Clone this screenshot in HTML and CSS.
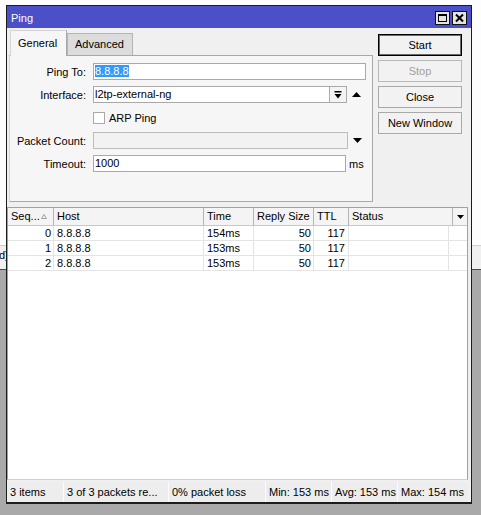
FILE: index.html
```html
<!DOCTYPE html>
<html>
<head>
<meta charset="utf-8">
<title>Ping</title>
<link rel="stylesheet" href="styles.css">
</head>
<body>
<div class="desk">
  <div class="desk-top"></div>
  <div class="desk-strip"><span class="peek">d)</span></div>
  <div class="desk-bottom"></div>
</div>

<div class="window">
  <div class="titlebar">
    <span class="title">Ping</span>
    <div class="tbtns">
      <span class="tbtn"><svg width="13" height="12" viewBox="0 0 13 12"><rect x="2.5" y="2.5" width="8" height="7" fill="none" stroke="#000" stroke-width="1"/><rect x="2" y="2" width="9" height="2" fill="#000"/></svg></span>
      <span class="tbtn"><svg width="13" height="12" viewBox="0 0 13 12"><path d="M3 2.5 L10 9.5 M10 2.5 L3 9.5" stroke="#000" stroke-width="2"/></svg></span>
    </div>
  </div>

  <div class="wbody">
    <div class="top">
      <div class="tabs">
        <div class="tabstrip">
          <div class="tab active">General</div>
          <div class="tab">Advanced</div>
        </div>
        <div class="panel">
          <div class="row">
            <span class="lbl">Ping To:</span>
            <div class="field">
              <div class="input"><span class="sel">8.8.8.8</span></div>
            </div>
          </div>
          <div class="row">
            <span class="lbl">Interface:</span>
            <div class="field">
              <div class="input">l2tp-external-ng</div>
              <div class="ddbtn"><svg width="8" height="8" viewBox="0 0 8 8"><rect x="0.5" y="0" width="7" height="1.5" fill="#000"/><polygon points="0.5,3 7.5,3 4,7.5" fill="#000"/></svg></div>
              <div class="arrow"><svg width="9" height="5" viewBox="0 0 9 5"><polygon points="0,5 9,5 4.5,0" fill="#000"/></svg></div>
            </div>
          </div>
          <div class="row">
            <span class="lbl"></span>
            <div class="field check">
              <span class="cb"></span>
              <span class="cblabel">ARP Ping</span>
            </div>
          </div>
          <div class="row">
            <span class="lbl">Packet Count:</span>
            <div class="field">
              <div class="input dis"></div>
              <div class="arrow"><svg width="9" height="5" viewBox="0 0 9 5"><polygon points="0,0 9,0 4.5,5" fill="#000"/></svg></div>
            </div>
          </div>
          <div class="row">
            <span class="lbl">Timeout:</span>
            <div class="field">
              <div class="input">1000</div>
              <div class="unit">ms</div>
            </div>
          </div>
        </div>
      </div>
      <div class="buttons">
        <div class="btn default">Start</div>
        <div class="btn disabled">Stop</div>
        <div class="btn">Close</div>
        <div class="btn">New Window</div>
      </div>
    </div>

    <div class="table">
      <div class="thead">
        <div class="th c-seq"><span>Seq...</span><svg class="sort" width="6" height="5" viewBox="0 0 6 5"><polygon points="0.5,4.5 5.5,4.5 3,0.5" fill="none" stroke="#a0a0a0" stroke-width="1"/></svg></div>
        <div class="th c-host">Host</div>
        <div class="th c-time">Time</div>
        <div class="th c-size">Reply Size</div>
        <div class="th c-ttl">TTL</div>
        <div class="th c-status">Status</div>
        <div class="th c-menu"><svg width="7" height="4" viewBox="0 0 7 4"><polygon points="0,0 7,0 3.5,4" fill="#000"/></svg></div>
      </div>
      <div class="tr">
        <div class="td c-seq num">0</div>
        <div class="td c-host">8.8.8.8</div>
        <div class="td c-time">154ms</div>
        <div class="td c-size num">50</div>
        <div class="td c-ttl num">117</div>
        <div class="td c-rstatus"></div>
        <div class="td c-rmenu"></div>
      </div>
      <div class="tr">
        <div class="td c-seq num">1</div>
        <div class="td c-host">8.8.8.8</div>
        <div class="td c-time">153ms</div>
        <div class="td c-size num">50</div>
        <div class="td c-ttl num">117</div>
        <div class="td c-rstatus"></div>
        <div class="td c-rmenu"></div>
      </div>
      <div class="tr">
        <div class="td c-seq num">2</div>
        <div class="td c-host">8.8.8.8</div>
        <div class="td c-time">153ms</div>
        <div class="td c-size num">50</div>
        <div class="td c-ttl num">117</div>
        <div class="td c-rstatus"></div>
        <div class="td c-rmenu"></div>
      </div>
    </div>

    <div class="status">
      <div class="sc s1">3 items</div>
      <div class="sc s2">3 of 3 packets re...</div>
      <div class="sc s3">0% packet loss</div>
      <div class="sc s4">Min: 153 ms</div>
      <div class="sc s5">Avg: 153 ms</div>
      <div class="sc s6">Max: 154 ms</div>
    </div>
  </div>
</div>
</body>
</html>
```
FILE: styles.css
```css
* { box-sizing: border-box; }
html, body { margin: 0; padding: 0; }
body {
  width: 481px;
  height: 515px;
  overflow: hidden;
  position: relative;
  font-family: "Liberation Sans", Arial, sans-serif;
  font-size: 11px;
  color: #000;
  background: #fff;
}

/* desktop behind the window */
.desk { display: flex; flex-direction: column; height: 515px; }
.desk-top { height: 245px; background: #fdfdfd; }
.desk-strip {
  height: 25px;
  background: #f0f0f0;
  border-top: 1px solid #cfcfcf;
  border-bottom: 1px solid #4a4a4a;
  padding-top: 3px;
  line-height: 13px;
}
.peek { display: block; color: #000; margin-left: -1px; }
.desk-bottom { flex: 1; background: #a9a9a9; }

/* window */
.window {
  position: absolute;
  left: 6px;
  top: 5px;
  width: 466px;
  height: 499px;
  border: 1px solid #1c1c1c;
  border-bottom-width: 2px;
  background: #f0f0f0;
  display: flex;
  flex-direction: column;
}
.titlebar {
  height: 22px;
  background: #4b50c8;
  display: flex;
  justify-content: space-between;
  padding: 0 4px 0 4px;
  flex: none;
}
.title {
  color: #fff;
  padding-top: 3px;
  line-height: 19px;
}
.tbtns { display: flex; gap: 2px; padding-top: 5px; }
.tbtn {
  width: 15px;
  height: 14px;
  border: 1px solid #111;
  background: #e4e4e4;
  display: flex;
  align-items: center;
  justify-content: center;
}
.tbtn svg { display: block; }

.wbody {
  flex: 1;
  display: flex;
  flex-direction: column;
  min-height: 0;
}
.top {
  height: 179px;
  display: flex;
  flex: none;
}
.tabs {
  margin-left: 2px;
  width: 364px;
  display: flex;
  flex-direction: column;
}
.tabstrip {
  margin-top: 2px;
  height: 25px;
  display: flex;
  align-items: flex-end;
  padding-left: 1px;
}
.tab {
  height: 22px;
  line-height: 21px;
  padding-left: 7px;
  width: 66px;
  background: #dcdcdc;
  border: 1px solid #b4b4b4;
  border-bottom: none;
}
.tab.active {
  position: relative;
  z-index: 1;
  width: 57px;
  height: 26px;
  margin-bottom: -1px;
  line-height: 25px;
  padding-left: 7px;
  background: #f6f6f6;
  border: 1px solid #d4d4d4;
  border-right-color: #a9a9a9;
  border-bottom: none;
}
.panel {
  height: 147px;
  background: #f6f6f6;
  border: 1px solid #a8a8a8;
  border-left-color: #d4d4d4;
  padding-top: 7px;
}
.row {
  display: flex;
  align-items: center;
  height: 17px;
  margin-bottom: 6px;
}
.lbl {
  width: 76px;
  margin-right: 7px;
  text-align: right;
  white-space: nowrap;
}
.field {
  width: 273px;
  height: 17px;
  display: flex;
  align-items: center;
}
.input {
  flex: 1;
  height: 17px;
  background: #fff;
  border: 1px solid #a9a9a9;
  padding-left: 1px;
  line-height: 15px;
  white-space: nowrap;
  overflow: hidden;
}
.input.dis { background: #f2f2f2; border-color: #bcbcbc; }
.sel { background: #3399ff; color: #fff; }
.ddbtn {
  width: 17px;
  height: 17px;
  border: 1px solid #a9a9a9;
  border-left: none;
  background: #f4f4f4;
  display: flex;
  align-items: center;
  justify-content: center;
}
.ddbtn svg, .arrow svg { display: block; }
.arrow {
  width: 19px;
  height: 17px;
  display: flex;
  align-items: center;
  justify-content: center;
}
.field .input.dis + .arrow { width: 18px; }
.unit { width: 20px; padding-left: 3px; }
.check { gap: 4px; }
.cb {
  width: 12px;
  height: 12px;
  background: #fff;
  border: 1px solid #a9a9a9;
}

.buttons {
  margin-left: 5px;
  padding-top: 6px;
  display: flex;
  flex-direction: column;
  gap: 4px;
}
.btn {
  width: 84px;
  height: 22px;
  border: 1px solid #a9a9a9;
  background: #f2f2f2;
  display: flex;
  align-items: center;
  justify-content: center;
}
.btn.default { border-color: #000; box-shadow: inset 0 0 0 1px #6a6a6a; }
.btn.disabled { color: #a0a0a0; border-color: #b8b8b8; }

/* table */
.table {
  flex: 1;
  margin: 0 3px 0 0;
  background: #fff;
  border: 1px solid #a0a0a0;
  border-bottom-color: #d0d0d0;
  min-height: 0;
  overflow: hidden;
}
.thead {
  display: flex;
  height: 18px;
  background: #f4f4f4;
}
.th {
  height: 18px;
  line-height: 17px;
  padding-left: 3px;
  border-right: 1px solid #b4b4b4;
  border-bottom: 1px solid #c8c8c8;
  white-space: nowrap;
}
.c-seq { width: 46px; }
.c-host { width: 150px; }
.c-time { width: 50px; }
.c-size { width: 60px; }
.c-ttl { width: 35px; }
.c-status { width: 104px; }
.c-menu { width: 14px; }
.c-rstatus { width: 100px; }
.c-rmenu { width: 18px; }
.th.c-seq {
  display: flex;
  align-items: center;
  justify-content: space-between;
  padding-right: 6px;
}
.sort { display: block; margin-top: -1px; }
.th.c-menu {
  border-right: none;
  padding-left: 0;
  display: flex;
  align-items: center;
  justify-content: center;
}
.th.c-menu svg { display: block; }
.tr {
  display: flex;
  height: 15px;
}
.td {
  height: 15px;
  line-height: 14px;
  padding-left: 3px;
  border-right: 1px solid #e4e4e4;
  border-bottom: 1px solid #e4e4e4;
  white-space: nowrap;
}
.td.num { text-align: right; padding-left: 0; padding-right: 2px; }
.td.c-ttl { padding-right: 3px; }
.td.c-rmenu { border-right: none; }

/* status bar */
.status {
  height: 20px;
  margin: 2px 3px 0 1px;
  display: flex;
  flex: none;
  background: #ededed;
}
.sc {
  height: 20px;
  line-height: 20px;
  padding-left: 3px;
  border-right: 1px solid #fcfcfc;
  white-space: nowrap;
  overflow: hidden;
}
.s1 { width: 56px; padding-left: 2px; }
.s2 { width: 105px; }
.s3 { width: 97px; }
.s4 { width: 66px; }
.s5 { width: 66px; }
.s6 { flex: 1; border-right: none; }
```
